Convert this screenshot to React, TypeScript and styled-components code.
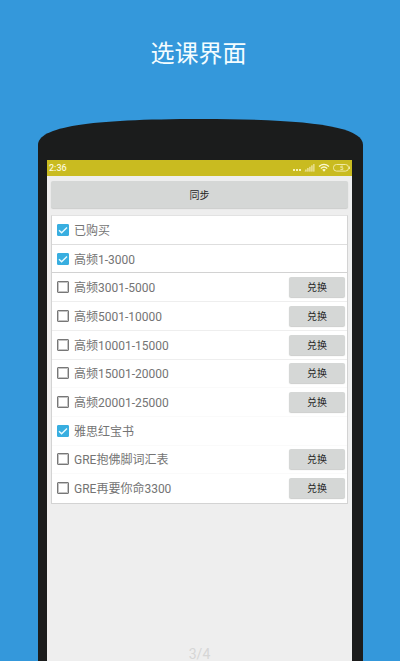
import React, { useState } from "react";
import styled, { createGlobalStyle } from "styled-components";

const GlobalStyle = createGlobalStyle`
  *, *::before, *::after { box-sizing: border-box; }
  body {
    margin: 0;
    background: #3498db;
    font-family: Roboto, "Noto Sans CJK SC", sans-serif;
  }
`;

const Page = styled.main`
  display: flex;
  flex-direction: column;
  min-height: 100vh;
  padding: 0 37px 0 38px;
`;

const Title = styled.h1`
  margin: 0;
  padding: 36px 4px 47px 0;
  color: #f4fdff;
  font-size: 24px;
  line-height: 36px;
  font-weight: 400;
  text-align: center;
`;

const Phone = styled.section`
  flex: 1;
  display: flex;
  flex-direction: column;
`;

const PhoneCap = styled.svg`
  display: block;
  width: 100%;
  height: 41px;
`;

const PhoneBody = styled.div`
  flex: 1;
  display: flex;
  padding: 0 11px 0 9px;
  background: #1b1c1c;
`;

const Screen = styled.div`
  flex: 1;
  min-width: 0;
  display: flex;
  flex-direction: column;
  background: #eeeeee;
`;

const StatusBar = styled.header`
  display: flex;
  align-items: center;
  justify-content: space-between;
  height: 16px;
  padding: 0 2px;
  background: #c9bb20;
  color: #fbf8d8;
  font-size: 9px;
  line-height: 16px;
  font-weight: 500;
`;

const StatusIcons = styled.svg`
  display: block;
  width: 58px;
  height: 10px;
`;

const Content = styled.div`
  flex: 1;
  display: flex;
  flex-direction: column;
  gap: 7px;
  padding: 5px 4px 0;
`;

const GreyButton = styled.button`
  border: 0;
  border-radius: 2px;
  padding: 0 0 1px;
  background: #d5d7d6;
  box-shadow: 0 1px 1px #cbcccb;
  color: #262626;
  font-family: inherit;
  font-size: 10px;
  cursor: pointer;
`;

const SyncButton = styled(GreyButton)`
  height: 27px;
`;

const RedeemButton = styled(GreyButton)`
  width: 56px;
  height: 20px;
`;

const CourseList = styled.ul`
  display: grid;
  grid-auto-rows: 1fr;
  min-height: 289px;
  margin: 0;
  padding: 0;
  list-style: none;
  background: #ffffff;
  border: 1px solid #d3d3d3;
  border-top-color: #e2e2e2;
`;

const CourseRow = styled.li<{ $divider: string }>`
  display: flex;
  align-items: center;
  justify-content: space-between;
  padding: 0 2px 0 5px;
  border-bottom: 1px solid ${(p) => p.$divider};
`;

const CourseLabel = styled.label`
  display: flex;
  align-items: center;
  gap: 5px;
  color: #747474;
  font-size: 12px;
  line-height: 18px;
  white-space: nowrap;
`;

const CourseName = styled.span`
  padding-top: 2px;
`;

const CheckSlot = styled.span`
  position: relative;
  width: 12px;
  height: 12px;
`;

const Checkbox = styled.input`
  appearance: none;
  display: block;
  width: 12px;
  height: 12px;
  margin: 0;
  border: 1px solid #777777;
  box-shadow: inset 0 0 0 1px #c4c4c4;
  border-radius: 1px;
  background: #ffffff;

  &:checked {
    border-color: #38aee0;
    box-shadow: none;
    background: #38aee0;
  }

  &:checked + svg {
    visibility: visible;
  }
`;

const Tick = styled.svg`
  position: absolute;
  inset: 0;
  visibility: hidden;
  pointer-events: none;
`;

const PageCount = styled.footer`
  margin-top: auto;
  color: #d6d6d6;
  font-size: 14px;
  line-height: 13px;
  text-align: center;
`;

type Course = { name: string; owned: boolean; divider: string };

const courses: Course[] = [
  { name: "已购买", owned: true, divider: "#dedede" },
  { name: "高频1-3000", owned: true, divider: "#d2d2d2" },
  { name: "高频3001-5000", owned: false, divider: "#eeeeee" },
  { name: "高频5001-10000", owned: false, divider: "#eeeeee" },
  { name: "高频10001-15000", owned: false, divider: "#eeeeee" },
  { name: "高频15001-20000", owned: false, divider: "#fafafa" },
  { name: "高频20001-25000", owned: false, divider: "#fafafa" },
  { name: "雅思红宝书", owned: true, divider: "#fafafa" },
  { name: "GRE抱佛脚词汇表", owned: false, divider: "#fafafa" },
  { name: "GRE再要你命3300", owned: false, divider: "#ffffff" },
];

function CourseItem({ name, owned, divider }: Course) {
  const [checked, setChecked] = useState(owned);
  return (
    <CourseRow $divider={divider}>
      <CourseLabel>
        <CheckSlot>
          <Checkbox
            type="checkbox"
            checked={checked}
            onChange={(e) => setChecked(e.target.checked)}
          />
          <Tick width="12" height="12" viewBox="0 0 12 12" aria-hidden="true">
            <path d="M2 6.2 4.6 8.8 10 3.4" fill="none" stroke="#e9fbff" strokeWidth="1.4" />
          </Tick>
        </CheckSlot>
        <CourseName>{name}</CourseName>
      </CourseLabel>
      {!owned && <RedeemButton type="button">兑换</RedeemButton>}
    </CourseRow>
  );
}

export default function App() {
  return (
    <>
      <GlobalStyle />
      <Page>
        <Title>选课界面</Title>
        <Phone>
          <PhoneCap viewBox="0 0 326 41" preserveAspectRatio="none" aria-hidden="true">
            <path d="M0 41V26C0 8 50 0 163 0S326 8 326 26V41Z" fill="#1b1c1c" />
          </PhoneCap>
          <PhoneBody>
            <Screen>
              <StatusBar>
                <span>2:36</span>
                <StatusIcons viewBox="0 0 58 10" aria-hidden="true">
                  <g fill="#f6f1b4">
                    <rect x="1" y="6" width="2" height="2" />
                    <rect x="4" y="6" width="2" height="2" />
                    <rect x="7" y="6" width="2" height="2" />
                  </g>
                  <path d="M12 8.5 22.5 1V8.5Z" fill="#d8cd5c" />
                  <g fill="#e6dc84">
                    <rect x="13" y="6.5" width="1.5" height="2" />
                    <rect x="15" y="5" width="1.5" height="3.5" />
                    <rect x="17" y="3.8" width="1.5" height="4.7" />
                    <rect x="19" y="2.4" width="1.5" height="6.1" />
                    <rect x="21" y="1" width="1.5" height="7.5" />
                  </g>
                  <g fill="none" stroke="#fbf8d0" strokeWidth="1.3">
                    <path d="M27 3.6Q32 -0.8 37 3.6" />
                    <path d="M28.8 5.4Q32 2.6 35.2 5.4" />
                  </g>
                  <path d="M30.2 6.8Q32 5.4 33.8 6.8L32 8.8Z" fill="#fbf8d0" />
                  <rect x="41.5" y="1.5" width="15" height="6.6" rx="3" fill="none" stroke="#f1eaa4" />
                  <path d="M51 3.2H48.8V4.7H50.8V6.5H48.4" fill="none" stroke="#f1eaa4" strokeWidth="0.9" />
                  <path d="M57.5 3.5V6" stroke="#f1eaa4" />
                </StatusIcons>
              </StatusBar>
              <Content>
                <SyncButton type="button">同步</SyncButton>
                <CourseList>
                  {courses.map((course) => (
                    <CourseItem key={course.name} {...course} />
                  ))}
                </CourseList>
                <PageCount>3/4</PageCount>
              </Content>
            </Screen>
          </PhoneBody>
        </Phone>
      </Page>
    </>
  );
}
